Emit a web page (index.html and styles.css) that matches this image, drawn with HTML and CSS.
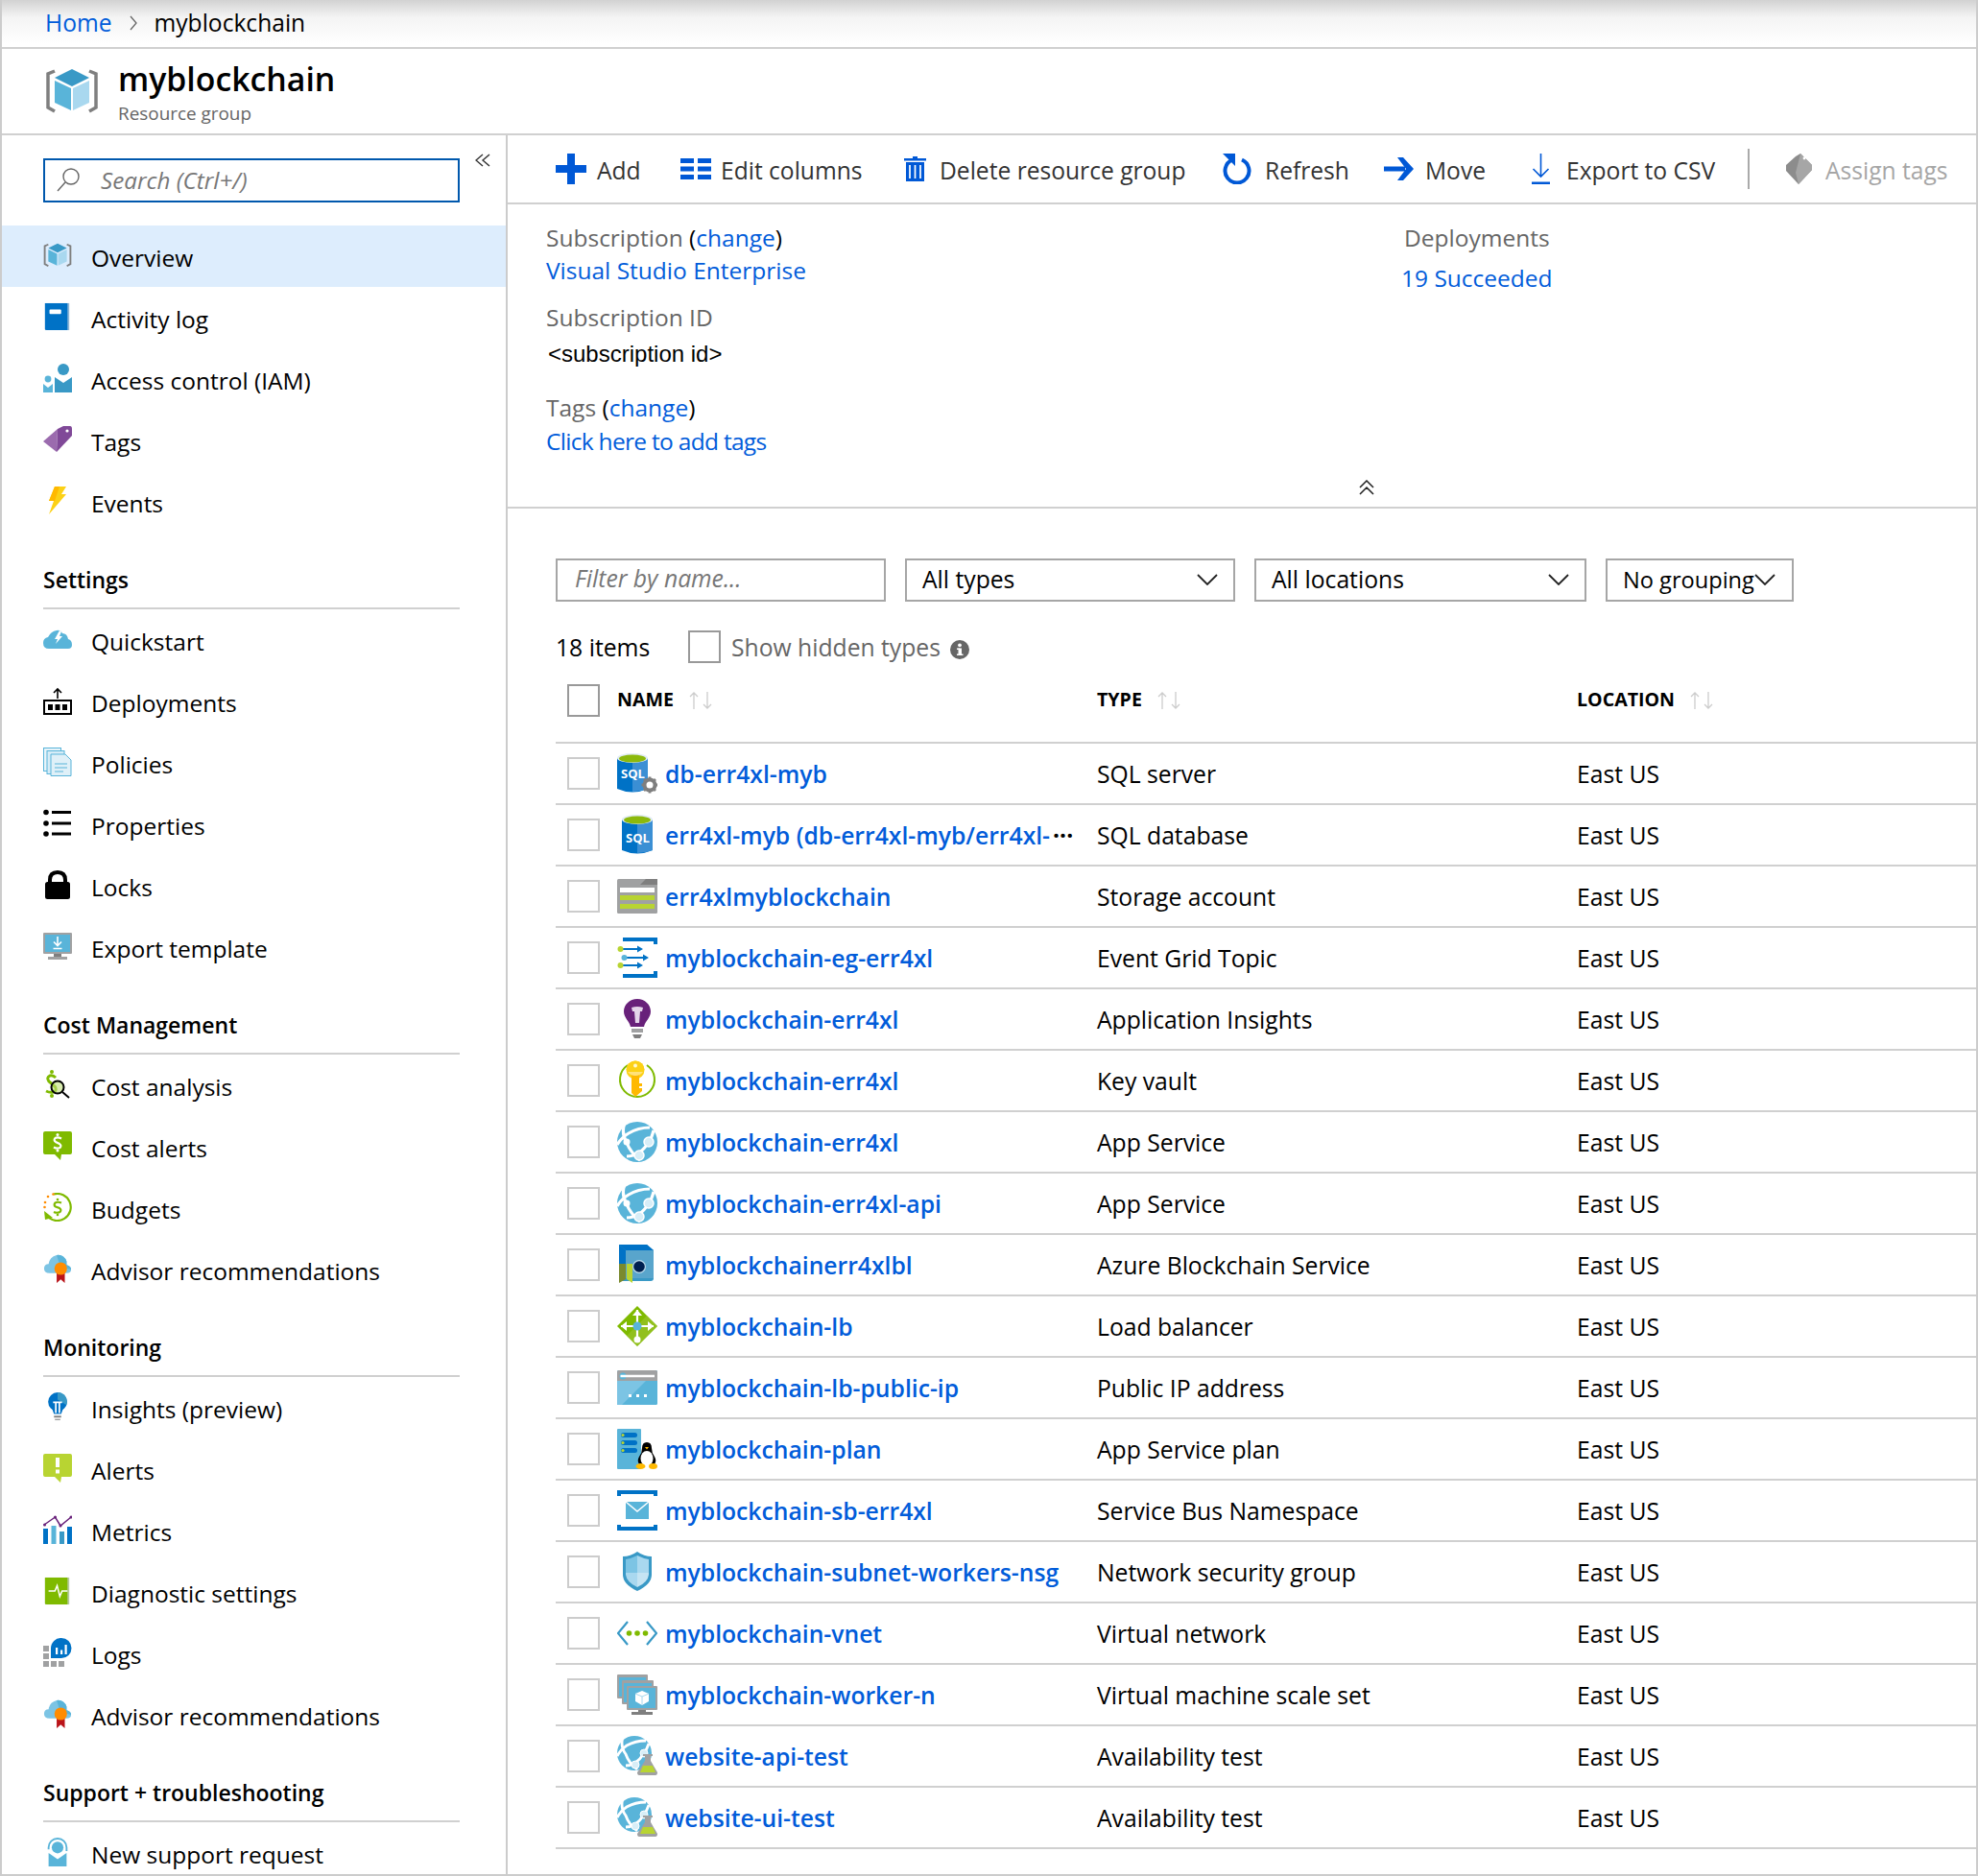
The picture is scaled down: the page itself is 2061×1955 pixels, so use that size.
FILE: index.html
```html
<!DOCTYPE html>
<html lang="en">
<head>
<meta charset="utf-8">
<title>myblockchain - Resource group</title>
<link rel="stylesheet" href="styles.css">
</head>
<body>
<svg class="defs" width="0" height="0" aria-hidden="true">
  <defs>
    <symbol id="i-rg" viewBox="0 0 56 48">
      <path d="M10 3 L3 6 V41 L10 45" fill="none" stroke="#7f7f7f" stroke-width="3.5"/>
      <path d="M46 3 L53 6 V41 L46 45" fill="none" stroke="#7f7f7f" stroke-width="3.5"/>
      <path d="M28 1 L46 10 L28 19 L10 10Z" fill="#3999c6"/>
      <path d="M10 13 L27 21 V44 L10 36Z" fill="#59b4d9"/>
      <path d="M29 21 L46 13 V36 L29 44Z" fill="#a9d8ef"/>
    </symbol>
    <symbol id="i-book" viewBox="0 0 30 32">
      <path d="M1 1 H28 V31 H1Z" fill="#8fb6d6"/>
      <path d="M1 1 H26 V31 H3 Q1 31 1 29Z" fill="#0072c6"/>
      <rect x="6" y="8" width="13" height="5" rx="1" fill="#fff"/>
    </symbol>
    <symbol id="i-iam" viewBox="0 0 30 30">
      <circle cx="21" cy="6" r="6" fill="#3999c6"/>
      <path d="M12 14 L21 20 L30 14 V30 H12Z" fill="#3999c6"/>
      <circle cx="5" cy="16" r="3.4" fill="#59b4d9"/>
      <path d="M0 21 L5 25 L10 21 V30 H0Z" fill="#59b4d9"/>
    </symbol>
    <symbol id="i-tag" viewBox="0 0 30 30">
      <path d="M14 28 L0 17 L15 4 L14 28Z" fill="#9b6bae"/>
      <path d="M15 4 L21 1 H28 Q30 1 30 4 V11 L14 28Z" fill="#804998"/>
      <circle cx="25" cy="6" r="1.6" fill="#fff"/>
    </symbol>
    <symbol id="i-bolt" viewBox="0 0 30 30">
      <path d="M12 0 H24 L19 8 H24 L6 29 L11 15 H6Z" fill="#fcd116"/>
      <path d="M12 0 H17 L12 15 H6Z" fill="#ffb900"/>
    </symbol>
    <symbol id="i-quick" viewBox="0 0 30 20">
      <path d="M6 20 Q0 20 0 14 Q0 9 5 8 Q8 2 14 1 Q18 0 20 4 Q25 4 26 10 Q30 11 30 16 Q30 20 26 20Z" fill="#59b4d9"/>
      <path d="M17 1 L12 10 H15 L13 15 L20 7 H17 L19 2Z" fill="#fff"/>
    </symbol>
    <symbol id="i-deploy" viewBox="0 0 30 30">
      <path d="M15 13 V3 M11 7 L15 3 L19 7" fill="none" stroke="#000" stroke-width="1.6"/>
      <rect x="1" y="15" width="28" height="14" fill="#fff" stroke="#000" stroke-width="2"/>
      <path d="M5 19 h5 v6 h-5Z M12.5 19 h5 v6 h-5Z M20 19 h5 v6 h-5Z" fill="#000"/>
    </symbol>
    <symbol id="i-policy" viewBox="0 0 30 30">
      <rect x="0.5" y="0.5" width="18" height="24" fill="#e8f4fa" stroke="#59b4d9"/>
      <rect x="4" y="3.5" width="18" height="24" fill="#d6ecf7" stroke="#59b4d9"/>
      <path d="M8 7 H23 L29 13 V29.5 H8Z" fill="#dff0f8" stroke="#59b4d9"/>
      <path d="M12 17 H25 M12 21 H25 M12 25 H21" stroke="#59b4d9" stroke-width="1"/>
    </symbol>
    <symbol id="i-props" viewBox="0 0 30 30">
      <circle cx="3" cy="3.5" r="2.8" fill="#000"/><circle cx="3" cy="15" r="2.8" fill="#000"/><circle cx="3" cy="26" r="2.8" fill="#000"/>
      <path d="M9 2 H29 V5 H9Z M9 13.500 H29 V16.500 H9Z M9 24.500 H29 V27.500 H9Z" fill="#000"/>
    </symbol>
    <symbol id="i-lock" viewBox="0 0 30 30">
      <path d="M7 14 V10 Q7 2 15 2 Q23 2 23 10 V14" fill="none" stroke="#000" stroke-width="4"/>
      <rect x="2" y="12" width="26" height="18" rx="2.500" fill="#000"/>
    </symbol>
    <symbol id="i-export" viewBox="0 0 30 28">
      <rect x="0" y="0" width="30" height="22" rx="1" fill="#a0a1a2"/>
      <rect x="2" y="2" width="26" height="18" fill="#59b4d9"/>
      <path d="M15 4 V13 M11 9.500 L15 13.500 L19 9.500 M10.500 16.500 H19.500" fill="none" stroke="#fff" stroke-width="1.600"/>
      <rect x="11" y="22" width="8" height="3" fill="#7f7f7f"/><rect x="5" y="25" width="20" height="3" fill="#a0a1a2"/>
    </symbol>
    <symbol id="i-costan" viewBox="0 0 30 30">
      <circle cx="9" cy="2" r="2" fill="#7fba00"/><circle cx="9" cy="27" r="2" fill="#7fba00"/>
      <path d="M13 8 Q10 5 7 6 Q3 8 6 12 L12 17 Q15 21 11 23 Q7 24 3 22" fill="none" stroke="#7fba00" stroke-width="3"/>
      <circle cx="15" cy="18" r="6.500" fill="#bfe07a" fill-opacity=".6" stroke="#000" stroke-width="2"/>
      <path d="M20 23 L27 29" stroke="#000" stroke-width="2"/>
    </symbol>
    <symbol id="i-costal" viewBox="0 0 30 30">
      <path d="M2 0 H28 Q30 0 30 2 V22 Q30 24 28 24 H19 L18 30 L12 24 H2 Q0 24 0 22 V2 Q0 0 2 0Z" fill="#7fba00"/>
      <circle cx="15" cy="3.500" r="1.500" fill="#fff"/><circle cx="15" cy="20" r="1.500" fill="#fff"/>
      <path d="M19 7.500 Q15 5.500 12.500 7 Q10.500 9 13 11 L17 13 Q19.500 15 17.500 17 Q14 18.500 11 16.500" fill="none" stroke="#fff" stroke-width="2.200"/>
    </symbol>
    <symbol id="i-budget" viewBox="0 0 30 30">
      <path d="M11 1.500 A14 14 0 1 1 4 24" fill="none" stroke="#7fba00" stroke-width="2.200"/>
      <path d="M1 19 L2 28 L10 26Z" fill="#7fba00"/>
      <circle cx="10.500" cy="1.500" r="1.300" fill="#ff8c00"/><circle cx="5" cy="4" r="1.300" fill="#ff8c00"/><circle cx="2" cy="10" r="1.300" fill="#ff8c00"/><circle cx="1.500" cy="15" r="1.300" fill="#ff8c00"/>
      <circle cx="15" cy="7" r="1.300" fill="#7fba00"/><circle cx="15" cy="23" r="1.300" fill="#7fba00"/>
      <path d="M19 10.500 Q15 9 12.500 10.500 Q10.500 13 13 14.500 L17 16 Q19.500 18 17.500 20 Q14 21.500 11 20" fill="none" stroke="#7fba00" stroke-width="2.200"/>
    </symbol>
    <symbol id="i-advisor" viewBox="0 0 30 32">
      <path d="M6 21 Q0 21 0 16 Q0 11 5 11 Q6 3 14 1 Q22 0 25 8 Q25 11 25 12 Q30 13 30 17 Q30 21 25 21Z" fill="#7cc4e4"/>
      <path d="M14 1 Q22 0 25 8 V12 Q30 13 30 17 L18 14Z" fill="#59b4d9"/>
      <path d="M14 20 V32 L18.500 28 L23 32 V20Z" fill="#ba141a"/>
      <circle cx="18.500" cy="16" r="7" fill="#ff8c00"/>
    </symbol>
    <symbol id="i-insight" viewBox="0 0 30 32">
      <circle cx="15" cy="10.500" r="10.500" fill="#0072c6"/>
      <path d="M15 0 A10.500 10.500 0 0 1 25 14 L15 8Z" fill="#3999c6"/>
      <path d="M7 15 Q10 20 11 24 H19 Q20 20 23 15Z" fill="#0072c6"/>
      <path d="M13 11 V23 M17 11 V23 M10 11 H20" stroke="#fff" stroke-width="1.800" fill="none"/>
      <path d="M11 26 H19 V28 H11Z" fill="#7f7f7f"/><path d="M12 29.500 H18 V31 H12Z" fill="#a0a1a2"/>
    </symbol>
    <symbol id="i-alert" viewBox="0 0 30 30">
      <path d="M2 0 H28 Q30 0 30 2 V22 Q30 24 28 24 H19 L18 30 L12 24 H2 Q0 24 0 22 V2 Q0 0 2 0Z" fill="#b8d432"/>
      <rect x="13" y="4" width="4" height="10" fill="#fff"/><rect x="13" y="16.500" width="4" height="4" fill="#fff"/>
    </symbol>
    <symbol id="i-metrics" viewBox="0 0 30 30">
      <rect x="0" y="14" width="5" height="16" fill="#0072c6"/><rect x="8.500" y="11" width="5" height="19" fill="#59b4d9"/><rect x="17" y="17" width="5" height="13" fill="#3999c6"/><rect x="25" y="12" width="5" height="18" fill="#0072c6"/>
      <path d="M1 10 L12.500 2 L18 11 L29 2" fill="none" stroke="#68217a" stroke-width="1.500"/>
      <circle cx="1.500" cy="10" r="1.500" fill="#68217a"/><circle cx="12.500" cy="2" r="1.500" fill="#68217a"/><circle cx="18" cy="11" r="1.500" fill="#68217a"/><circle cx="29" cy="2" r="1.500" fill="#68217a"/>
    </symbol>
    <symbol id="i-diag" viewBox="0 0 30 32">
      <path d="M1 1 H28 V31 H1Z" fill="#b5c9a0"/>
      <path d="M1 1 H26 V31 H3 Q1 31 1 29Z" fill="#7fba00"/>
      <path d="M5 16 H12 L14.500 10 L17.500 22 L20 16 H26" fill="none" stroke="#fff" stroke-width="1.600"/>
    </symbol>
    <symbol id="i-logs" viewBox="0 0 30 30">
      <path d="M0 8 h6 v6 h-6Z M0 16 h6 v6 h-6Z M0 24 h6 v6 h-6Z M8 24 h6 v6 h-6Z M16 24 h6 v6 h-6Z" fill="#a0a1a2"/>
      <path d="M19 0 A10.500 10.500 0 0 1 19 21 H8 V10.500 A10.500 10.500 0 0 1 19 0Z" fill="#0072c6"/>
      <path d="M13 10 h2.200 v7 h-2.200Z M18 12.500 h2.200 v4.500 h-2.200Z M22.500 7 h2.200 v10 h-2.200Z" fill="#fff"/>
    </symbol>
    <symbol id="i-support" viewBox="0 0 30 32">
      <path d="M5 13 V11 A10 10 0 0 1 25 11 V15" fill="none" stroke="#59b4d9" stroke-width="2"/>
      <circle cx="15" cy="11" r="6.500" fill="#59b4d9"/>
      <path d="M5 17 L15 24 L25 17 V32 H5Z" fill="#59b4d9"/>
    </symbol>

    <symbol id="r-sqlsrv" viewBox="0 0 42 42">
      <path d="M0 5 H32 V37 Q16 44 0 37Z" fill="#0072c6"/>
      <path d="M16 5 H32 V37 Q24 40 16 40Z" fill="#3b8fd4"/>
      <ellipse cx="16" cy="5" rx="16" ry="5" fill="#e2ecf5"/>
      <ellipse cx="16" cy="5.500" rx="14" ry="4" fill="#8cb90c"/>
      <text x="4" y="26" class="sql-text">SQL</text>
      <circle cx="34" cy="33" r="5.500" fill="#fff" stroke="#7f7f7f" stroke-width="4"/>
      <path d="M34 24.500 V29 M34 37 V41.500 M25.500 33 H30 M38 33 H42 M28 27 L30.500 29.500 M40 27 L37.500 29.500 M28 39 L30.500 36.500 M40 39 L37.500 36.500" stroke="#7f7f7f" stroke-width="2.800"/>
    </symbol>
    <symbol id="r-sqldb" viewBox="0 0 42 42">
      <path d="M5 5 H37 V37 Q21 44 5 37Z" fill="#0072c6"/>
      <path d="M21 5 H37 V37 Q29 40 21 40Z" fill="#3b8fd4"/>
      <ellipse cx="21" cy="5" rx="16" ry="5" fill="#e2ecf5"/>
      <ellipse cx="21" cy="5.500" rx="14" ry="4" fill="#8cb90c"/>
      <text x="9" y="29" class="sql-text">SQL</text>
    </symbol>
    <symbol id="r-storage" viewBox="0 0 42 42">
      <rect x="0" y="3" width="42" height="36" rx="1.500" fill="#a0a1a2"/>
      <path d="M30 3 H42 V9 H24Z" fill="#7f7f7f"/>
      <rect x="3" y="12" width="36" height="5" fill="#fff"/>
      <rect x="3" y="20" width="36" height="5" fill="#b8d432"/>
      <rect x="3" y="29" width="36" height="5" fill="#b8d432"/>
    </symbol>
    <symbol id="r-grid" viewBox="0 0 42 42">
      <path d="M6 0 H42 V7 H38 V4 H6Z M6 42 H42 V35 H38 V38 H6Z" fill="#0072c6"/>
      <path d="M6 12 H22 M9 21 H28 M6 29 H22" stroke="#0072c6" stroke-width="2.200"/>
      <path d="M21 8.500 L27 12 L21 15.500Z M27 17.500 L33 21 L27 24.500Z M21 25.500 L27 29 L21 32.500Z" fill="#0072c6"/>
      <circle cx="3.500" cy="12" r="3" fill="#b8d432"/><circle cx="7.500" cy="21" r="3" fill="#59b4d9"/><circle cx="3.500" cy="29" r="3" fill="#b8d432"/>
    </symbol>
    <symbol id="r-insights" viewBox="0 0 42 42">
      <path d="M21 0 C13 0 7 6 7 13 C7 20 13 23 14 29 H28 C29 23 35 20 35 13 C35 6 29 0 21 0Z" fill="#68217a"/>
      <path d="M15 9 Q21 7 27 9 L26 13 H24 L23 25 H19 L18 13 H16Z" fill="#e4d5ea"/>
      <rect x="15" y="31" width="12" height="4" fill="#a0a1a2"/><path d="M16 37 H26 L24 41 H18Z" fill="#7f7f7f"/>
    </symbol>
    <symbol id="r-vault" viewBox="0 0 42 42">
      <path d="M11 5 A18 18 0 1 0 31 5" fill="none" stroke="#7fba00" stroke-width="2"/>
      <circle cx="19" cy="10" r="9.500" fill="#fcd116"/>
      <path d="M15 14 H23 V24 H26 V27 H23 V29 H26 V32 L19 38 L15 34Z" fill="#ffb900"/>
      <path d="M9.500 10 A9.500 9.500 0 0 1 28.500 10Z" fill="#fcd116"/>
      <path d="M11 12 H27 Q24 16 19 16 Q14 16 11 12Z" fill="#ffe27a"/>
      <circle cx="19" cy="5.500" r="2" fill="#fff8d0"/>
    </symbol>
    <symbol id="r-app" viewBox="0 0 42 42">
      <circle cx="21" cy="21" r="21" fill="#59b4d9"/>
      <path d="M8 1 Q4 12 10 22 Q14 32 24 40 M34 6 Q22 6 12 12 Q5 16 0 24 M10 36 Q24 36 33 21 Q36 17 38 9" fill="none" stroke="#fff" stroke-width="3.200"/>
      <circle cx="33" cy="21" r="5" fill="#d8eef7" stroke="#fff" stroke-width="1.500"/><circle cx="23" cy="35" r="5" fill="#d8eef7" stroke="#fff" stroke-width="1.500"/><circle cx="10" cy="21" r="3.500" fill="#fff"/>
    </symbol>
    <symbol id="r-chain" viewBox="0 0 42 42">
      <path d="M2 0 H31 L38 6 V35 Q38 38 35 38 H2Z" fill="#3999c6"/>
      <path d="M2 0 H31 L38 6 H9 Z" fill="#0072c6"/>
      <path d="M2 0 L9 6 V20 H2Z" fill="#0072c6"/>
      <path d="M9 6 H38 L38 35 L9 35Z" fill="#59a5cc"/>
      <path d="M2 20 H9 V36 L2 40Z" fill="#7a8a2e"/>
      <path d="M10 20 H16 V40 L10 36Z" fill="#b8d432"/>
      <circle cx="23" cy="23" r="7" fill="#fff" fill-opacity=".6"/>
      <circle cx="23" cy="23" r="5.800" fill="#002050"/>
    </symbol>
    <symbol id="r-lb" viewBox="0 0 42 42">
      <path d="M21 0 L42 21 L21 42 L0 21Z" fill="#7fba00"/>
      <path d="M21 42 L42 21 L31 10 L10 31Z" fill="#a4c639" fill-opacity=".5"/>
      <path d="M21 4 V38 M4 21 H38" stroke="#fff" stroke-width="2.200"/>
      <path d="M16 10 L21 4 L26 10Z M32 16 L38 21 L32 26Z M10 16 L4 21 L10 26Z" fill="#fff"/>
      <circle cx="21" cy="35" r="3.500" fill="#fff"/>
      <circle cx="21" cy="21" r="4.500" fill="#59b4d9"/>
    </symbol>
    <symbol id="r-ip" viewBox="0 0 42 42">
      <rect x="0" y="3" width="42" height="36" rx="1.500" fill="#59b4d9"/>
      <path d="M0 39 V14 H30 L5 39Z" fill="#7cc4e4"/>
      <path d="M1.500 3 H40.500 Q42 3 42 4.500 V14 H0 V4.500 Q0 3 1.500 3Z" fill="#a0a1a2"/>
      <circle cx="6" cy="9" r="3.500" fill="#59b4d9"/>
      <path d="M3.500 9 H39" stroke="#fff" stroke-width="2.500"/>
      <path d="M12 28 h3 v3 h-3Z M20 28 h3 v3 h-3Z M28 28 h3 v3 h-3Z" fill="#fff"/>
    </symbol>
    <symbol id="r-plan" viewBox="0 0 42 42">
      <rect x="0" y="0" width="25" height="42" rx="1" fill="#59b4d9"/>
      <rect x="4" y="4" width="17" height="5" rx="2.500" fill="#0072c6"/><rect x="4" y="12" width="17" height="5" rx="2.500" fill="#0072c6"/><rect x="4" y="20" width="17" height="5" rx="2.500" fill="#0072c6"/>
      <circle cx="6" cy="6.500" r="1.600" fill="#b8d432"/><circle cx="6" cy="14.500" r="1.600" fill="#b8d432"/><circle cx="6" cy="22.500" r="1.600" fill="#b8d432"/>
      <path d="M31 14 Q36 14 36 20 Q36 25 39 29 Q42 34 38 38 H24 Q20 34 23 29 Q26 25 26 20 Q26 14 31 14Z" fill="#000"/>
      <ellipse cx="31" cy="31" rx="6.500" ry="8" fill="#fff"/>
      <path d="M29 19 H33 L31 21.500Z" fill="#ffb900"/>
      <ellipse cx="24.500" cy="39" rx="5" ry="3" fill="#ffb900"/><ellipse cx="37.500" cy="39" rx="4.500" ry="3" fill="#ffb900"/>
    </symbol>
    <symbol id="r-bus" viewBox="0 0 42 42">
      <path d="M0 0 H42 V6 H38 V4 H4 V6 H0Z M0 42 H42 V36 H38 V38 H4 V36 H0Z" fill="#0072c6"/>
      <rect x="9" y="12" width="24" height="18" fill="#59b4d9"/>
      <path d="M9 12 L21 22 L33 12" fill="none" stroke="#fff" stroke-width="1.500"/>
    </symbol>
    <symbol id="r-nsg" viewBox="0 0 42 42">
      <path d="M21 0 Q28 5 36 5 V24 Q36 34 21 41 Q6 34 6 24 V5 Q14 5 21 0Z" fill="#3999c6"/>
      <path d="M21 4 Q27 7 33 8 V22 H21Z" fill="#a9d8ef"/>
      <path d="M9 8 Q15 7 21 4 V22 H9Z" fill="#7cc4e4"/>
      <path d="M9 22 H21 V37 Q10 32 9 24Z" fill="#a9d8ef"/>
      <path d="M21 22 H33 V24 Q32 32 21 37Z" fill="#c5e4f3"/>
    </symbol>
    <symbol id="r-vnet" viewBox="0 0 42 42">
      <path d="M11 9 L1 21 L11 33 M31 9 L41 21 L31 33" fill="none" stroke="#3999c6" stroke-width="2.200"/>
      <circle cx="12.500" cy="21" r="2.800" fill="#7fba00"/><circle cx="21" cy="21" r="2.800" fill="#7fba00"/><circle cx="29.500" cy="21" r="2.800" fill="#7fba00"/>
    </symbol>
    <symbol id="r-vmss" viewBox="0 0 42 42">
      <rect x="0" y="0" width="32" height="25" rx="1" fill="#a0a1a2"/><rect x="2" y="3" width="28" height="20" fill="#59b4d9"/>
      <rect x="5" y="6" width="33" height="25" rx="1" fill="#a0a1a2"/><rect x="7" y="9" width="29" height="20" fill="#59b4d9"/>
      <rect x="10" y="12" width="32" height="25" rx="1" fill="#a0a1a2"/><rect x="12" y="14" width="28" height="21" fill="#59b4d9"/>
      <path d="M26 17 L33 20 V28 L26 32 L19 28 V20Z" fill="#fff"/>
      <path d="M19 20 L26 23 L33 20 M26 23 V32" fill="none" stroke="#a9d8ef" stroke-width="1"/>
      <rect x="22" y="37" width="8" height="3" fill="#7f7f7f"/><rect x="15" y="39" width="22" height="3" fill="#7f7f7f"/>
    </symbol>
    <symbol id="r-test" viewBox="0 0 42 42">
      <circle cx="18" cy="18" r="18" fill="#59b4d9"/>
      <path d="M6 1 Q3 11 9 19 Q12 28 21 35 M30 5 Q19 5 10 10 Q4 14 0 21 M9 31 Q20 31 28 18 Q31 14 33 8" fill="none" stroke="#fff" stroke-width="2.800"/>
      <circle cx="28" cy="18" r="4" fill="#d8eef7" stroke="#fff"/><circle cx="19" cy="30" r="4" fill="#d8eef7" stroke="#fff"/>
      <path d="M27 19 H37 V21 H35 V26 L42 38 Q42 41 40 41 H23 Q21 41 21 38 L29 26 V21 H27Z" fill="#a0a1a2"/>
      <path d="M27 31 H37 L40 38 H24Z" fill="#b8d432"/>
    </symbol>
  </defs>
</svg>

<div class="page">
  <nav class="crumb">
    <a class="link" href="#">Home</a>
    <svg class="crumb-sep" viewBox="0 0 8 16"><path d="M1 1 L7 8 L1 15" fill="none" stroke="#666" stroke-width="1.300"/></svg>
    <span>myblockchain</span>
  </nav>

  <header class="head">
    <svg class="head-icon"><use href="#i-rg"/></svg>
    <div class="head-text">
      <h1 class="title">myblockchain</h1>
      <div class="subtitle">Resource group</div>
    </div>
  </header>

  <div class="main">
    <aside class="side">
      <div class="search-row">
        <label class="search">
          <svg class="search-icon" viewBox="0 0 24 25"><circle cx="15" cy="9" r="8" fill="none" stroke="#666" stroke-width="1.400"/><path d="M9 15 L1 24" stroke="#666" stroke-width="1.400"/></svg>
          <span class="search-ph">Search (Ctrl+/)</span>
        </label>
        <svg class="collapse" viewBox="0 0 16 14"><path d="M8 1 L1 7 L8 13 M15 1 L8 7 L15 13" fill="none" stroke="#333" stroke-width="1.400"/></svg>
      </div>

      <ul class="menu">
        <li class="item active"><svg class="ico"><use href="#i-rg"/></svg><span>Overview</span></li>
        <li class="item"><svg class="ico"><use href="#i-book"/></svg><span>Activity log</span></li>
        <li class="item"><svg class="ico"><use href="#i-iam"/></svg><span>Access control (IAM)</span></li>
        <li class="item"><svg class="ico"><use href="#i-tag"/></svg><span>Tags</span></li>
        <li class="item"><svg class="ico"><use href="#i-bolt"/></svg><span>Events</span></li>
      </ul>

      <h2 class="section">Settings</h2>
      <ul class="menu">
        <li class="item"><svg class="ico"><use href="#i-quick"/></svg><span>Quickstart</span></li>
        <li class="item"><svg class="ico"><use href="#i-deploy"/></svg><span>Deployments</span></li>
        <li class="item"><svg class="ico"><use href="#i-policy"/></svg><span>Policies</span></li>
        <li class="item"><svg class="ico"><use href="#i-props"/></svg><span>Properties</span></li>
        <li class="item"><svg class="ico"><use href="#i-lock"/></svg><span>Locks</span></li>
        <li class="item"><svg class="ico"><use href="#i-export"/></svg><span>Export template</span></li>
      </ul>

      <h2 class="section">Cost Management</h2>
      <ul class="menu">
        <li class="item"><svg class="ico"><use href="#i-costan"/></svg><span>Cost analysis</span></li>
        <li class="item"><svg class="ico"><use href="#i-costal"/></svg><span>Cost alerts</span></li>
        <li class="item"><svg class="ico"><use href="#i-budget"/></svg><span>Budgets</span></li>
        <li class="item"><svg class="ico"><use href="#i-advisor"/></svg><span>Advisor recommendations</span></li>
      </ul>

      <h2 class="section">Monitoring</h2>
      <ul class="menu">
        <li class="item"><svg class="ico"><use href="#i-insight"/></svg><span>Insights (preview)</span></li>
        <li class="item"><svg class="ico"><use href="#i-alert"/></svg><span>Alerts</span></li>
        <li class="item"><svg class="ico"><use href="#i-metrics"/></svg><span>Metrics</span></li>
        <li class="item"><svg class="ico"><use href="#i-diag"/></svg><span>Diagnostic settings</span></li>
        <li class="item"><svg class="ico"><use href="#i-logs"/></svg><span>Logs</span></li>
        <li class="item"><svg class="ico"><use href="#i-advisor"/></svg><span>Advisor recommendations</span></li>
      </ul>

      <h2 class="section">Support + troubleshooting</h2>
      <ul class="menu">
        <li class="item"><svg class="ico"><use href="#i-support"/></svg><span>New support request</span></li>
      </ul>
    </aside>

    <section class="content">
      <div class="toolbar">
        <div class="tool tool-add">
          <svg class="t-icon t-add" viewBox="0 0 32 32"><path d="M12 0 H20 V12 H32 V20 H20 V32 H12 V20 H0 V12 H12Z" fill="#0058d6"/></svg>
          <span class="t-label">Add</span>
        </div>
        <div class="tool tool-edit">
          <svg class="t-icon t-edit" viewBox="0 0 32 22"><path d="M0 0 H14 V5 H0Z M18 0 H32 V5 H18Z M0 8.500 H14 V13.500 H0Z M18 8.500 H32 V13.500 H18Z M0 17 H14 V22 H0Z M18 17 H32 V22 H18Z" fill="#0058d6"/></svg>
          <span class="t-label">Edit columns</span>
        </div>
        <div class="tool tool-del">
          <svg class="t-icon t-del" viewBox="0 0 23 26"><path d="M9 0 H14 V2 H23 V4.500 H0 V2 H9Z" fill="#0058d6"/><path d="M2 6 H21 V26 H2Z" fill="#0058d6"/><path d="M6 9 V23 M11.500 9 V23 M17 9 V23" stroke="#fff" stroke-width="1.700"/></svg>
          <span class="t-label">Delete resource group</span>
        </div>
        <div class="tool tool-ref">
          <svg class="t-icon t-ref" viewBox="0 0 30 32"><path d="M10 6.500 A12.500 12.500 0 1 0 20 6.500" fill="none" stroke="#0058d6" stroke-width="4"/><path d="M0 0 H13 V13Z" fill="#0058d6"/></svg>
          <span class="t-label">Refresh</span>
        </div>
        <div class="tool tool-move">
          <svg class="t-icon t-move" viewBox="0 0 31 24"><path d="M0 9.500 H22 V14.500 H0Z" fill="#0058d6"/><path d="M14 0 H20 L31 12 L20 24 H14 L23 12Z" fill="#0058d6"/></svg>
          <span class="t-label">Move</span>
        </div>
        <div class="tool tool-exp">
          <svg class="t-icon t-exp" viewBox="0 0 19 32"><path d="M9.500 0 V24 M1.500 16 L9.500 24 L17.500 16" fill="none" stroke="#0058d6" stroke-width="1.600"/><path d="M0 29.500 H19 V32 H0Z" fill="#0058d6"/></svg>
          <span class="t-label">Export to CSV</span>
        </div>
        <div class="tool-sep"></div>
        <div class="tool tool-tags">
          <svg class="t-icon t-tag" viewBox="0 0 27 32"><path d="M15 0 L27 12 L27 17 L13 32 L0 18 V12 L10 3Z" fill="#8c8c8c"/><path d="M15 0 L27 12 V17 L13 32 L10 20 Z" fill="#a6a6a6"/><circle cx="19" cy="5" r="1.400" fill="#fff"/></svg>
          <span class="t-label">Assign tags</span>
        </div>
      </div>

      <div class="essentials">
        <div class="ess-grid">
          <div class="ess-col">
            <div class="ess-line"><span class="muted">Subscription</span> (<a class="link" href="#">change</a>)</div>
            <div class="ess-line"><a class="link" href="#">Visual Studio Enterprise</a></div>
            <div class="ess-line ess-gap muted">Subscription ID</div>
            <div class="ess-line ess-id">&lt;subscription id&gt;</div>
            <div class="ess-line ess-gap2"><span class="muted">Tags</span> (<a class="link" href="#">change</a>)</div>
            <div class="ess-line ess-click"><a class="link ess-tight" href="#">Click here to add tags</a></div>
          </div>
          <div class="ess-col">
            <div class="ess-line muted ess-dep">Deployments</div>
            <div class="ess-line ess-succ"><a class="link" href="#">19 Succeeded</a></div>
          </div>
        </div>
        <svg class="ess-up" viewBox="0 0 16 16"><path d="M1 8 L8 1 L15 8 M1 15 L8 8 L15 15" fill="none" stroke="#222" stroke-width="1.500"/></svg>
      </div>

      <div class="list">
        <div class="filters">
          <div class="box box-filter">Filter by name...</div>
          <div class="box box-sel">All types<svg class="chev" viewBox="0 0 22 12"><path d="M1 1 L11 11 L21 1" fill="none" stroke="#222" stroke-width="1.800"/></svg></div>
          <div class="box box-sel box-loc">All locations<svg class="chev" viewBox="0 0 22 12"><path d="M1 1 L11 11 L21 1" fill="none" stroke="#222" stroke-width="1.800"/></svg></div>
          <div class="box box-sel box-group">No grouping<svg class="chev" viewBox="0 0 22 12"><path d="M1 1 L11 11 L21 1" fill="none" stroke="#222" stroke-width="1.800"/></svg></div>
        </div>
        <div class="counts">
          <span class="count">18 items</span>
          <span class="check check-dark check-hidden"></span>
          <span class="muted">Show hidden types</span>
          <svg class="info" viewBox="0 0 20 20"><circle cx="10" cy="10" r="10" fill="#666"/><rect x="8.500" y="8.500" width="3.500" height="7.500" fill="#fff"/><rect x="7" y="8.500" width="3" height="1.500" fill="#fff"/><rect x="7" y="14.500" width="6.500" height="1.500" fill="#fff"/><circle cx="10" cy="5.300" r="1.900" fill="#fff"/></svg>
        </div>

        <div class="thead">
          <div class="col-name th"><span class="check check-dark"></span><span class="th-label">NAME</span><svg class="sort" viewBox="0 0 24 18"><path d="M5 18 V1 M1 5 L5 1 L9 5 M19 0 V17 M15 13 L19 17 L23 13" fill="none" stroke="#ccc" stroke-width="1.300"/></svg></div>
          <div class="col-type th"><span class="th-label">TYPE</span><svg class="sort" viewBox="0 0 24 18"><path d="M5 18 V1 M1 5 L5 1 L9 5 M19 0 V17 M15 13 L19 17 L23 13" fill="none" stroke="#ccc" stroke-width="1.300"/></svg></div>
          <div class="col-loc th"><span class="th-label">LOCATION</span><svg class="sort" viewBox="0 0 24 18"><path d="M5 18 V1 M1 5 L5 1 L9 5 M19 0 V17 M15 13 L19 17 L23 13" fill="none" stroke="#ccc" stroke-width="1.300"/></svg></div>
        </div>

        <div class="tr"><div class="col-name"><span class="check"></span><svg class="r-ico"><use href="#r-sqlsrv"/></svg><a class="res" href="#">db-err4xl-myb</a></div><div class="col-type">SQL server</div><div class="col-loc">East US</div></div>
        <div class="tr"><div class="col-name"><span class="check"></span><svg class="r-ico"><use href="#r-sqldb"/></svg><a class="res" href="#">err4xl-myb (db-err4xl-myb/err4xl-</a><span class="dots">···</span></div><div class="col-type">SQL database</div><div class="col-loc">East US</div></div>
        <div class="tr"><div class="col-name"><span class="check"></span><svg class="r-ico"><use href="#r-storage"/></svg><a class="res" href="#">err4xlmyblockchain</a></div><div class="col-type">Storage account</div><div class="col-loc">East US</div></div>
        <div class="tr"><div class="col-name"><span class="check"></span><svg class="r-ico"><use href="#r-grid"/></svg><a class="res" href="#">myblockchain-eg-err4xl</a></div><div class="col-type">Event Grid Topic</div><div class="col-loc">East US</div></div>
        <div class="tr"><div class="col-name"><span class="check"></span><svg class="r-ico"><use href="#r-insights"/></svg><a class="res" href="#">myblockchain-err4xl</a></div><div class="col-type">Application Insights</div><div class="col-loc">East US</div></div>
        <div class="tr"><div class="col-name"><span class="check"></span><svg class="r-ico"><use href="#r-vault"/></svg><a class="res" href="#">myblockchain-err4xl</a></div><div class="col-type">Key vault</div><div class="col-loc">East US</div></div>
        <div class="tr"><div class="col-name"><span class="check"></span><svg class="r-ico"><use href="#r-app"/></svg><a class="res" href="#">myblockchain-err4xl</a></div><div class="col-type">App Service</div><div class="col-loc">East US</div></div>
        <div class="tr"><div class="col-name"><span class="check"></span><svg class="r-ico"><use href="#r-app"/></svg><a class="res" href="#">myblockchain-err4xl-api</a></div><div class="col-type">App Service</div><div class="col-loc">East US</div></div>
        <div class="tr"><div class="col-name"><span class="check"></span><svg class="r-ico"><use href="#r-chain"/></svg><a class="res" href="#">myblockchainerr4xlbl</a></div><div class="col-type">Azure Blockchain Service</div><div class="col-loc">East US</div></div>
        <div class="tr"><div class="col-name"><span class="check"></span><svg class="r-ico"><use href="#r-lb"/></svg><a class="res" href="#">myblockchain-lb</a></div><div class="col-type">Load balancer</div><div class="col-loc">East US</div></div>
        <div class="tr"><div class="col-name"><span class="check"></span><svg class="r-ico"><use href="#r-ip"/></svg><a class="res" href="#">myblockchain-lb-public-ip</a></div><div class="col-type">Public IP address</div><div class="col-loc">East US</div></div>
        <div class="tr"><div class="col-name"><span class="check"></span><svg class="r-ico"><use href="#r-plan"/></svg><a class="res" href="#">myblockchain-plan</a></div><div class="col-type">App Service plan</div><div class="col-loc">East US</div></div>
        <div class="tr"><div class="col-name"><span class="check"></span><svg class="r-ico"><use href="#r-bus"/></svg><a class="res" href="#">myblockchain-sb-err4xl</a></div><div class="col-type">Service Bus Namespace</div><div class="col-loc">East US</div></div>
        <div class="tr"><div class="col-name"><span class="check"></span><svg class="r-ico"><use href="#r-nsg"/></svg><a class="res" href="#">myblockchain-subnet-workers-nsg</a></div><div class="col-type">Network security group</div><div class="col-loc">East US</div></div>
        <div class="tr"><div class="col-name"><span class="check"></span><svg class="r-ico"><use href="#r-vnet"/></svg><a class="res" href="#">myblockchain-vnet</a></div><div class="col-type">Virtual network</div><div class="col-loc">East US</div></div>
        <div class="tr"><div class="col-name"><span class="check"></span><svg class="r-ico"><use href="#r-vmss"/></svg><a class="res" href="#">myblockchain-worker-n</a></div><div class="col-type">Virtual machine scale set</div><div class="col-loc">East US</div></div>
        <div class="tr"><div class="col-name"><span class="check"></span><svg class="r-ico"><use href="#r-test"/></svg><a class="res" href="#">website-api-test</a></div><div class="col-type">Availability test</div><div class="col-loc">East US</div></div>
        <div class="tr"><div class="col-name"><span class="check"></span><svg class="r-ico"><use href="#r-test"/></svg><a class="res" href="#">website-ui-test</a></div><div class="col-type">Availability test</div><div class="col-loc">East US</div></div>
      </div>
    </section>
  </div>
</div>
</body>
</html>
```

FILE: styles.css
```css
* { box-sizing: border-box; }
html, body { margin: 0; padding: 0; background: #fff; }
body { font-family: "Open Sans", "Noto Sans", sans-serif; font-size: 24.6px; color: #000; }
.defs { position: absolute; }
ul { list-style: none; margin: 0; padding: 0; }
h1, h2 { margin: 0; }
a { text-decoration: none; }

.page {
  width: 2061px; height: 1955px; overflow: hidden;
  border-left: 2px solid #ccc; border-right: 2px solid #ccc; border-bottom: 2px solid #ccc;
  display: flex; flex-direction: column;
}
.link { color: #015cda; }
.muted { color: #666; }

.crumb {
  height: 51px; flex: none; border-bottom: 2px solid #d0d0d0;
  padding: 0 0 2px 45px; display: flex; align-items: center;
  background: linear-gradient(#d2d2d2 0, #f4f4f4 18px, #fff 46px);
}
.crumb-sep { width: 8px; height: 16px; margin: 0 18px 0 18px; }

.head {
  height: 90px; flex: none; border-bottom: 2px solid #d0d0d0;
  display: flex; align-items: flex-start; padding: 20px 0 0 45px;
}
.head-icon { width: 56px; height: 48px; margin-right: 20px; }
.head-text { margin-top: -12px; }
.title { font-size: 33.8px; font-weight: 600; line-height: 46px; }
.subtitle { font-size: 18.9px; line-height: 26px; color: #666; }

.main { display: flex; flex: 1; min-height: 0; }

.side { width: 527px; flex: none; border-right: 2px solid #ccc; font-size: 24.5px; }
.search-row { display: flex; padding: 24px 0 24px 43px; align-items: flex-start; }
.search {
  width: 434px; height: 46px; border: 2px solid #0058ad;
  display: flex; align-items: center; padding: 0 0 2px 12px;
}
.search-icon { width: 24px; height: 25px; margin-right: 22px; }
.search-ph { font-style: italic; color: #777; font-size: 24.2px; }
.collapse { width: 16px; height: 14px; margin: -5px 0 0 16px; }

.item { height: 64px; display: flex; align-items: center; padding: 3px 0 0 43px; }
.item.active { background: #ddedfd; }
.ico { width: 30px; height: 30px; margin: -6px 20px 0 0; flex: none; }

.section {
  height: 80px; margin: 0 48px 0 43px; border-bottom: 2px solid #d0d0d0;
  font-size: 23px; font-weight: 600; padding-top: 32px; line-height: 34px;
}

.content { flex: 1; min-width: 0; }

.toolbar {
  height: 72px; border-bottom: 2px solid #d0d0d0; display: flex; align-items: center;
  padding-left: 50px; font-size: 24.6px;
}
.tool { display: flex; align-items: center; color: #333; flex: none; }
.t-icon { flex: none; }
.t-label { margin-top: 2px; }
.tool-add { width: 130px; }
.t-add { width: 32px; height: 32px; margin-right: 11px; }
.tool-edit { width: 232px; }
.t-edit { width: 32px; height: 22px; margin-right: 10px; }
.tool-del { width: 333px; padding-left: 1px; }
.t-del { width: 23px; height: 26px; margin-right: 14px; }
.tool-ref { width: 168px; }
.t-ref { width: 30px; height: 32px; margin-right: 14px; }
.tool-move { width: 154px; }
.t-move { width: 31px; height: 24px; margin-right: 12px; }
.tool-exp { width: 225px; }
.t-exp { width: 19px; height: 32px; margin-right: 17px; }
.tool-sep { width: 2px; height: 42px; background: #aaa; margin-right: 38px; flex: none; }
.tool-tags { color: #a6a6a6; }
.t-tag { width: 27px; height: 32px; margin-right: 14px; }

.essentials { height: 317px; border-bottom: 2px solid #d0d0d0; padding: 18px 0 0 40px; font-size: 24.5px; }
.ess-grid { display: grid; grid-template-columns: 888px 1fr; height: 269px; }
.ess-line { line-height: 34px; height: 34px; }
.ess-gap { margin-top: 15px; }
.ess-id { font-family: "Liberation Sans", Arial, sans-serif; font-size: 24px; margin-top: 4px; padding-left: 2px; }
.ess-gap2 { margin-top: 22px; }
.ess-click { margin-top: 1px; }
.ess-tight { letter-spacing: -0.7px; }
.ess-dep { padding-left: 6px; }
.ess-succ { margin-top: 8px; padding-left: 3px; }
.ess-up { display: block; width: 16px; height: 16px; margin: 0 0 0 847px; }

.list { padding: 52px 0 0 50px; font-size: 24.7px; }
.filters { display: flex; gap: 20px; height: 45px; }
.box {
  border: 2px solid #a6a6a6; height: 45px; width: 344px; display: flex; align-items: center; white-space: nowrap;
  padding-bottom: 2px;
}
.box-filter { font-style: italic; color: #777; padding: 0 0 4px 18px; }
.box-sel { padding: 0 16px 2px 16px; justify-content: space-between; }
.box-loc { width: 346px; }
.box-group { width: 196px; padding-right: 18px; font-size: 23.6px; }
.chev { width: 22px; height: 12px; flex: none; }

.counts { display: flex; align-items: center; height: 34px; margin-top: 30px; }
.count { width: 138px; }
.check { display: block; width: 34px; height: 34px; border: 2px solid #ccc; flex: none; background: #fff; }
.check-dark { border-color: #999; }
.check-hidden { margin-right: 11px; }
.info { width: 20px; height: 20px; margin: 6px 0 0 10px; }

.thead { display: flex; height: 84px; border-bottom: 2px solid #d0d0d0; padding-top: 22px; align-items: flex-start; }
.th { display: flex; align-items: center; height: 34px; }
.th-label { font-size: 19.6px; font-weight: 700; margin-top: -3px; }
.sort { width: 24px; height: 18px; margin: -1px 0 0 16px; }
.col-name { width: 564px; flex: none; padding-left: 12px; display: flex; align-items: center; }
.col-type { width: 500px; flex: none; }
.col-name .check + .th-label { margin-left: 18px; }

.tr { display: flex; align-items: center; height: 64px; border-bottom: 2px solid #d0d0d0; }
.r-ico { width: 42px; height: 42px; margin: 0 8px 0 18px; flex: none; }
.res { color: #015cda; font-weight: 600; white-space: nowrap; }
.dots { font-weight: 700; color: #000; margin-left: 3px; }
.sql-text { font-family: "Open Sans", sans-serif; font-weight: 700; font-size: 13px; fill: #fff; }
```
